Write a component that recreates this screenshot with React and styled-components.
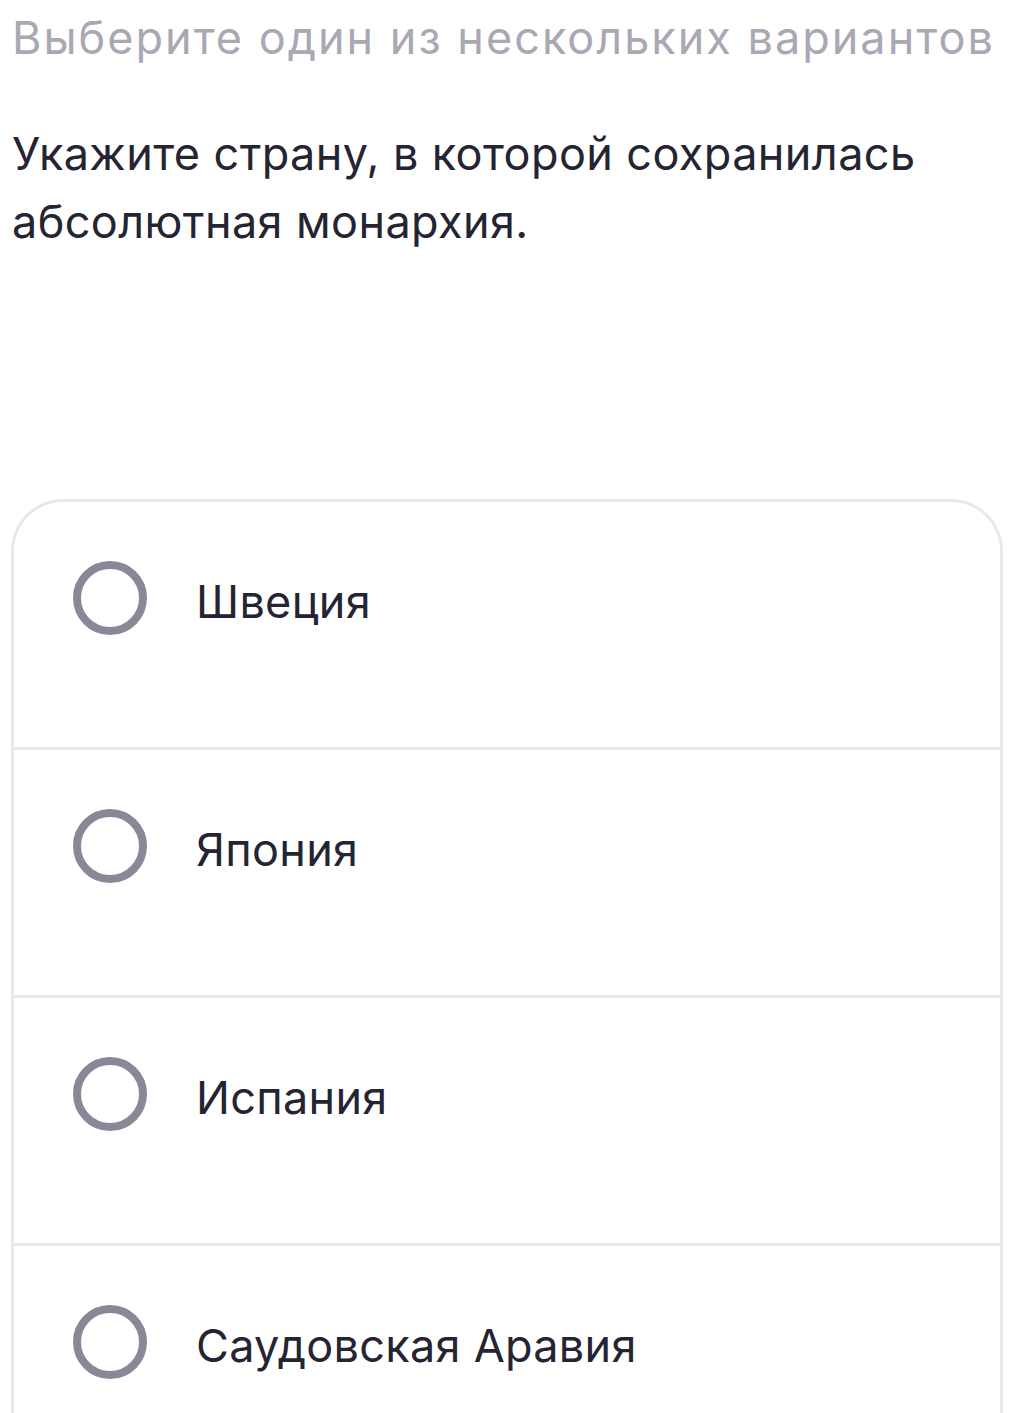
import React from "react";
import styled, { createGlobalStyle } from "styled-components";

const GlobalStyle = createGlobalStyle`
  html, body {
    margin: 0;
    padding: 0;
    background: #ffffff;
    font-family: Inter, "Noto Sans", sans-serif;
  }
`;

const Page = styled.div`
  padding: 6px 31px 0 11px;
`;

const Hint = styled.div`
  padding-left: 1px;
  font-size: 45px;
  line-height: 64px;
  letter-spacing: 2px;
  color: #a9a8b3;
  white-space: nowrap;
`;

const Question = styled.div`
  margin-top: 50px;
  padding-left: 1px;
  font-size: 45px;
  line-height: 68px;
  letter-spacing: 0.4px;
  color: #252432;
`;

const Card = styled.div`
  margin-top: 243px;
  border: 3px solid #e8e8ea;
  border-bottom: none;
  border-radius: 52px 52px 0 0;
  overflow: hidden;
`;

const Option = styled.label`
  display: flex;
  align-items: flex-start;
  gap: 49px;
  box-sizing: border-box;
  height: 248px;
  padding: 59px 0 0 59px;
  border-bottom: 3px solid #e8e8ea;
  cursor: pointer;
`;

const Radio = styled.span`
  flex: none;
  width: 74px;
  height: 74px;
  box-sizing: border-box;
  border: 8px solid #8a8898;
  border-radius: 50%;
`;

const OptionText = styled.span`
  margin-top: 4px;
  font-size: 45px;
  line-height: 74px;
  letter-spacing: 0.3px;
  color: #252432;
`;

const options = ["Швеция", "Япония", "Испания", "Саудовская Аравия"];

export default function App() {
  return (
    <>
      <GlobalStyle />
      <Page>
        <Hint>Выберите один из нескольких вариантов</Hint>
        <Question>
          Укажите страну, в которой сохранилась
          <br />
          абсолютная монархия.
        </Question>
        <Card>
          {options.map((item) => (
            <Option key={item}>
              <Radio />
              <OptionText>{item}</OptionText>
            </Option>
          ))}
        </Card>
      </Page>
    </>
  );
}
